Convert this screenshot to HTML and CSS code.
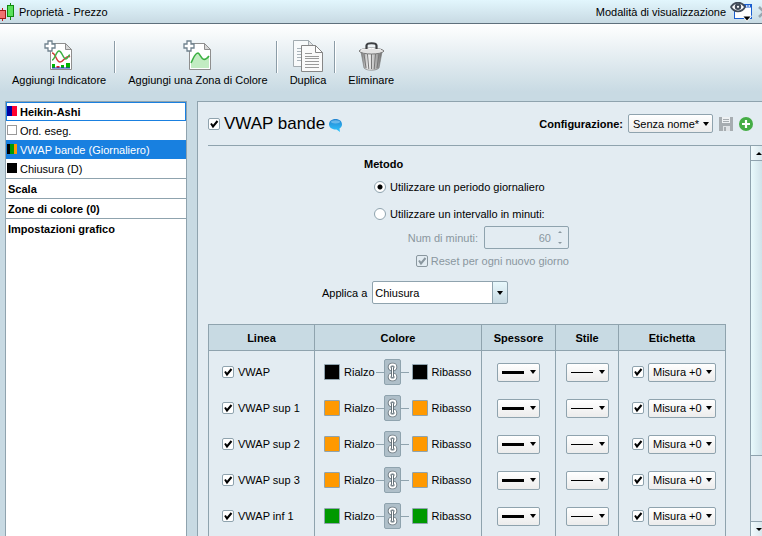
FILE: index.html
```html
<!DOCTYPE html>
<html lang="it">
<head>
  <meta charset="UTF-8" />
  <title>Proprietà - Prezzo</title>
  <link rel="stylesheet" href="styles.css">
</head>
<body>

<svg class="defs" width="0" height="0" aria-hidden="true">
  <symbol id="chain" viewBox="0 0 11 20">
    <g fill="none" stroke="#66727a" stroke-width="3.600">
      <rect x="2.500" y="2.500" width="6" height="5" rx="2.500"/>
      <rect x="2.500" y="12.500" width="6" height="5" rx="2.500"/>
    </g>
    <g fill="none" stroke="#fff" stroke-width="1.800">
      <rect x="2.500" y="2.500" width="6" height="5" rx="2.500"/>
      <rect x="2.500" y="12.500" width="6" height="5" rx="2.500"/>
    </g>
    <rect x="4.500" y="4.500" width="2" height="11" rx="1" fill="#fff" stroke="#66727a"/>
  </symbol>
  <symbol id="plus" viewBox="0 0 12 12">
    <path d="M4 1h4v3h3v4H8v3H4V8H1V4h3z" fill="#fff" stroke="#70828e" stroke-width="1.3"/>
  </symbol>
</svg>

<header class="titlebar">
  <svg class="candles" width="16" height="18" viewBox="0 0 16 18">
    <path d="M2.500 5v13" stroke="#c01818"/>
    <rect x="-.5" y="7.500" width="6" height="8" fill="#f07070" stroke="#a01818"/>
    <path d="M10.500 0v17" stroke="#108a10"/>
    <rect x="7.500" y="2.500" width="6" height="11" fill="#58e058" stroke="#108a10"/>
  </svg>
  <h1>Proprietà - Prezzo</h1>
  <span class="view-label">Modalità di visualizzazione</span>
  <button class="icon-btn view-btn" aria-label="Modalità di visualizzazione">
    <svg width="24" height="20" viewBox="0 0 24 20">
      <rect x="4.500" y="2.500" width="17" height="14" fill="#fff" stroke="#1a5fd0"/>
      <rect x="5" y="2" width="16" height="3.500" fill="#1a5fd0"/>
      <path d="M16 4h1.500M18.500 4H20" stroke="#fff" stroke-width="1.500"/>
      <path d="M0 5C3-2 13-2 16 5 13 12 3 12 0 5z" fill="#414b58"/>
      <path d="M2 5C5 .5 11 .5 14 5 11 9.500 5 9.500 2 5z" fill="#fff"/>
      <circle cx="8" cy="4.800" r="3.200" fill="#414b58"/>
      <circle cx="8" cy="4.800" r="1.100" fill="#fff"/>
      <path d="M13.500 14.500h7l-3.500 4z" fill="#000" stroke="#fff" stroke-width="1.600" paint-order="stroke"/>
    </svg>
  </button>
  <button class="icon-btn close-btn" aria-label="Chiudi">
    <svg width="12" height="12" viewBox="0 0 12 12"><path d="M1 1l10 10M11 1L1 11" stroke="#9aa7b0" stroke-width="2.500"/></svg>
  </button>
</header>

<nav class="toolbar">
  <button class="tool">
    <svg width="32" height="32" viewBox="0 0 32 32">
      <path d="M7.500 3.500h15l6 6v20h-21z" fill="#fff" stroke="#8e8e8e"/>
      <path d="M22.500 3.500v6h6z" fill="#d8d8d8" stroke="#8e8e8e"/>
      <path d="M9 13c4 0 4 9 8 9s6-8 10-5" fill="none" stroke="#d03a3a" stroke-width="1.500"/>
      <path d="M9 20c3 0 4-9 7-9s4 8 7 8c2 0 2-4 4-4" fill="none" stroke="#3cb043" stroke-width="1.500"/>
      <path d="M9 24h3v4H9zM18 25h3v3h-3zM23 23h4v5h-4z" fill="#00b400"/>
      <rect x="13.500" y="26" width="3" height="2" fill="#e02020"/>
      <path d="M9 28h18" stroke="#1830c0"/>
      <use href="#plus" x="1" y="0" width="12" height="12"/>
    </svg>
    <span>Aggiungi Indicatore</span>
  </button>
  <i class="sep"></i>
  <button class="tool">
    <svg width="32" height="32" viewBox="0 0 32 32">
      <path d="M7.500 3.500h15l6 6v20h-21z" fill="#fff" stroke="#8e8e8e"/>
      <path d="M22.500 3.500v6h6z" fill="#d8d8d8" stroke="#8e8e8e"/>
      <path d="M9 23c3-6 4-10 7-10 3 1 4 9 11 3v12H9z" fill="#c2ecc2"/>
      <path d="M9 23c3-6 4-10 7-10 3 1 4 12 11 3" fill="none" stroke="#3cb043" stroke-width="1.500"/>
      <use href="#plus" x="1" y="0" width="12" height="12"/>
    </svg>
    <span>Aggiungi una Zona di Colore</span>
  </button>
  <i class="sep"></i>
  <button class="tool">
    <svg width="32" height="32" viewBox="0 0 32 32">
      <path d="M1.500.5h15l6 6v20h-21z" fill="#f8fafb" stroke="#a2abb0"/>
      <path d="M16.500.5v6h6z" fill="#e4e4e4" stroke="#a2abb0"/>
      <path d="M5 8.500h5M5 11.500h5M5 14.500h5M5 17.500h5M5 20.500h5" stroke="#a9b3ba"/>
      <path d="M9.500 5.500h14l7 7v19h-21z" fill="#fafafa" stroke="#868686"/>
      <path d="M23.500 5.500v7h7z" fill="#fff" stroke="#868686"/>
      <path d="M13 13.500h7M13 16.500h14M13 18.500h14M13 21.500h14M13 24.500h14M13 27.500h14" stroke="#9a9a9a"/>
    </svg>
    <span>Duplica</span>
  </button>
  <i class="sep"></i>
  <button class="tool">
    <svg width="32" height="32" viewBox="0 0 32 32">
      <defs>
        <linearGradient id="can">
          <stop offset="0" stop-color="#777"/>
          <stop offset=".35" stop-color="#f4f4f4"/>
          <stop offset=".7" stop-color="#b4b4b4"/>
          <stop offset="1" stop-color="#6c6c6c"/>
        </linearGradient>
      </defs>
      <path d="M6 12l3 16c3 3 12 3 15 0l3-16z" fill="url(#can)" stroke="#777" stroke-width=".6"/>
      <path d="M9 14l2 14M12.500 14l1.300 15M16.500 14v15M20.500 14l-1.300 15M24 14l-2 14" stroke="#777"/>
      <path d="M4 11c3-4 22-4 25 0-2 4-23 4-25 0z" fill="#e2e2e2" stroke="#7a7a7a"/>
      <path d="M6 10c4-2 17-2 20 0" fill="none" stroke="#fff"/>
      <path d="M11.500 9V5.500c0-3 10-3 10 0V9" fill="none" stroke="#3c3f42" stroke-width="2.200"/>
    </svg>
    <span>Eliminare</span>
  </button>
</nav>

<div class="workspace">

  <aside class="sidebar">
    <button class="item focused"><i class="mark heikin"></i>Heikin-Ashi</button>
    <button class="item"><i class="mark empty"></i>Ord. eseg.</button>
    <button class="item selected"><i class="mark bands"></i>VWAP bande (Giornaliero)</button>
    <button class="item"><i class="mark close"></i>Chiusura (D)</button>
    <button class="item section">Scala</button>
    <button class="item section">Zone di colore (0)</button>
    <button class="item section">Impostazioni grafico</button>
  </aside>

  <main class="panel">
    <div class="panel-head">
      <input type="checkbox" id="bands" checked>
      <label for="bands" class="panel-title">VWAP bande</label>
      <svg class="bubble" width="13" height="13" viewBox="0 0 13 13">
        <defs>
          <linearGradient id="blue" x2="0" y2="1">
            <stop offset="0" stop-color="#2484d0"/>
            <stop offset="1" stop-color="#2fc6ff"/>
          </linearGradient>
        </defs>
        <path d="M6.500 0C10.500 0 13 2.300 13 5.300c0 2-1 3.400-2.500 4.200l.5 3.500-3.500-2.500C3 10.800 0 8.500 0 5.300 0 2.300 2.500 0 6.500 0z" fill="url(#blue)"/>
        <ellipse cx="6.500" cy="2.800" rx="4.500" ry="1.600" fill="#8fd0f6" opacity=".6"/>
      </svg>
      <label for="config" class="config-label">Configurazione:</label>
      <select id="config" class="drop config"><option>Senza nome*</option></select>
      <button class="icon-btn" aria-label="Salva" disabled>
        <svg width="14" height="14" viewBox="0 0 14 14">
          <path d="M0 0h14v14H0z" fill="#a7adb1"/>
          <path d="M3 0h8v6H3z" fill="#eef1f3"/>
          <path d="M4 2.500h6M4 4.500h6" stroke="#a7adb1"/>
          <path d="M4 9h7v5H4z" fill="#dfe3e6"/>
          <path d="M5 10h2v4H5z" fill="#a7adb1"/>
        </svg>
      </button>
      <button class="icon-btn" aria-label="Aggiungi">
        <svg width="14" height="14" viewBox="0 0 14 14">
          <circle cx="7" cy="7" r="7" fill="#45ad45"/>
          <path d="M7 3v8M3 7h8" stroke="#fff" stroke-width="2.200"/>
        </svg>
      </button>
    </div>

    <div class="panel-body">
      <div class="content">
        <form class="method">
          <h2>Metodo</h2>
          <div class="row"><input type="radio" name="period" id="daily" checked><label for="daily">Utilizzare un periodo giornaliero</label></div>
          <div class="row"><input type="radio" name="period" id="interval"><label for="interval">Utilizzare un intervallo in minuti:</label></div>
          <div class="minutes">
            <label for="minutes">Num di minuti:</label>
            <span class="spinner">
              <input type="text" id="minutes" value="60" disabled>
              <svg width="6" height="15" viewBox="0 0 6 15"><path d="M3 1l2 2H1zM3 14l2-2H1z" fill="#8a979f"/></svg>
            </span>
          </div>
          <div class="reset"><input type="checkbox" id="reset" checked disabled><label for="reset">Reset per ogni nuovo giorno</label></div>
        </form>

        <div class="apply">
          <label for="apply">Applica a</label>
          <select id="apply" class="combo"><option>Chiusura</option></select>
        </div>

        <table class="lines">
          <colgroup><col class="c-line"><col class="c-color"><col class="c-width"><col class="c-style"><col class="c-tag"></colgroup>
          <thead>
            <tr><th>Linea</th><th>Colore</th><th>Spessore</th><th>Stile</th><th>Etichetta</th></tr>
          </thead>
          <tbody>
            <tr>
              <td><div class="cell name"><input type="checkbox" id="l1" checked><label for="l1">VWAP</label></div></td>
              <td><div class="cell colors"><button class="swatch black" id="up1"></button><label for="up1">Rialzo</label><i class="dash"></i><button class="link" aria-label="Collega"><svg width="11" height="20"><use href="#chain"/></svg></button><i class="dash"></i><button class="swatch black" id="dn1"></button><label for="dn1">Ribasso</label></div></td>
              <td><div class="cell"><select class="drop stroke thick" aria-label="Spessore"><option></option></select></div></td>
              <td><div class="cell"><select class="drop stroke thin" aria-label="Stile"><option></option></select></div></td>
              <td><div class="cell tag"><input type="checkbox" aria-label="Etichetta" checked><select class="drop measure" aria-label="Misura"><option>Misura +0</option></select></div></td>
            </tr>
            <tr>
              <td><div class="cell name"><input type="checkbox" id="l2" checked><label for="l2">VWAP sup 1</label></div></td>
              <td><div class="cell colors"><button class="swatch orange" id="up2"></button><label for="up2">Rialzo</label><i class="dash"></i><button class="link" aria-label="Collega"><svg width="11" height="20"><use href="#chain"/></svg></button><i class="dash"></i><button class="swatch orange" id="dn2"></button><label for="dn2">Ribasso</label></div></td>
              <td><div class="cell"><select class="drop stroke thick" aria-label="Spessore"><option></option></select></div></td>
              <td><div class="cell"><select class="drop stroke thin" aria-label="Stile"><option></option></select></div></td>
              <td><div class="cell tag"><input type="checkbox" aria-label="Etichetta" checked><select class="drop measure" aria-label="Misura"><option>Misura +0</option></select></div></td>
            </tr>
            <tr>
              <td><div class="cell name"><input type="checkbox" id="l3" checked><label for="l3">VWAP sup 2</label></div></td>
              <td><div class="cell colors"><button class="swatch orange" id="up3"></button><label for="up3">Rialzo</label><i class="dash"></i><button class="link" aria-label="Collega"><svg width="11" height="20"><use href="#chain"/></svg></button><i class="dash"></i><button class="swatch orange" id="dn3"></button><label for="dn3">Ribasso</label></div></td>
              <td><div class="cell"><select class="drop stroke thick" aria-label="Spessore"><option></option></select></div></td>
              <td><div class="cell"><select class="drop stroke thin" aria-label="Stile"><option></option></select></div></td>
              <td><div class="cell tag"><input type="checkbox" aria-label="Etichetta" checked><select class="drop measure" aria-label="Misura"><option>Misura +0</option></select></div></td>
            </tr>
            <tr>
              <td><div class="cell name"><input type="checkbox" id="l4" checked><label for="l4">VWAP sup 3</label></div></td>
              <td><div class="cell colors"><button class="swatch orange" id="up4"></button><label for="up4">Rialzo</label><i class="dash"></i><button class="link" aria-label="Collega"><svg width="11" height="20"><use href="#chain"/></svg></button><i class="dash"></i><button class="swatch orange" id="dn4"></button><label for="dn4">Ribasso</label></div></td>
              <td><div class="cell"><select class="drop stroke thick" aria-label="Spessore"><option></option></select></div></td>
              <td><div class="cell"><select class="drop stroke thin" aria-label="Stile"><option></option></select></div></td>
              <td><div class="cell tag"><input type="checkbox" aria-label="Etichetta" checked><select class="drop measure" aria-label="Misura"><option>Misura +0</option></select></div></td>
            </tr>
            <tr>
              <td><div class="cell name"><input type="checkbox" id="l5" checked><label for="l5">VWAP inf 1</label></div></td>
              <td><div class="cell colors"><button class="swatch green" id="up5"></button><label for="up5">Rialzo</label><i class="dash"></i><button class="link" aria-label="Collega"><svg width="11" height="20"><use href="#chain"/></svg></button><i class="dash"></i><button class="swatch green" id="dn5"></button><label for="dn5">Ribasso</label></div></td>
              <td><div class="cell"><select class="drop stroke thick" aria-label="Spessore"><option></option></select></div></td>
              <td><div class="cell"><select class="drop stroke thin" aria-label="Stile"><option></option></select></div></td>
              <td><div class="cell tag"><input type="checkbox" aria-label="Etichetta" checked><select class="drop measure" aria-label="Misura"><option>Misura +0</option></select></div></td>
            </tr>
          </tbody>
        </table>
      </div>

      <div class="scrollbar">
        <button class="arrow" aria-label="Su"><svg width="6" height="3" viewBox="0 0 6 3"><path d="M3 0l3 3H0z"/></svg></button>
        <div class="track"><div class="thumb"></div></div>
        <button class="arrow down" aria-label="Giù"><svg width="6" height="3" viewBox="0 0 6 3"><path d="M0 0h6L3 3z"/></svg></button>
      </div>
    </div>
  </main>

</div>

</body>
</html>
```

FILE: styles.css
```css
* { box-sizing: border-box; }
body { display: flex; flex-direction: column; height: 100vh; margin: 0; overflow: hidden; background: #c8dae3; color: #000; font: 11px/14px "Liberation Sans", Arial, sans-serif; }
button, input, select { margin: 0; padding: 0; border: none; border-radius: 0; background: none; color: inherit; font: inherit; }
svg { display: block; flex: none; }
.defs { position: absolute; }

/* title bar */
.titlebar { display: flex; align-items: center; height: 24px; flex: none; border-bottom: 1px solid #5f707c; background: linear-gradient(#e2f6fd, #c8dae3); }
.titlebar h1 { flex: 1; margin: 0 0 0 3px; font-size: 11px; font-weight: normal; }
.icon-btn { flex: none; }
.view-btn { margin-left: 4px; }
.close-btn { margin: 0 -8px 0 4px; }

/* toolbar */
.toolbar { display: flex; flex: none; height: 77px; padding: 16px 0 0 12px; background: linear-gradient(#fff, #c8dae3 68px); }
.tool { display: flex; flex-direction: column; align-items: center; height: 48px; gap: 1px; white-space: nowrap; }
.sep { width: 2px; height: 32px; margin: 1px 12px 0 8px; border-left: 1px solid #8b9ca7; border-right: 1px solid #fff; }

.workspace { display: flex; flex: 1; min-height: 0; gap: 10px; padding-left: 5px; }

/* sidebar */
.sidebar { display: flex; flex-direction: column; flex: none; width: 182px; border: 1px solid #8fa3ae; border-bottom: none; background: #fff; }
.item { display: flex; align-items: center; gap: 3px; height: 19px; padding-left: 1px; text-align: left; }
.item.focused { padding-left: 0; border: 1px solid #1a80e0; font-weight: bold; }
.item.selected { background: #1880e0; color: #fff; }
.item.section { height: 20px; padding-left: 2px; border-top: 1px solid #8fa3ae; font-weight: bold; }
.mark { width: 10px; height: 10px; flex: none; margin-bottom: 2px; }
.mark.heikin { background: linear-gradient(90deg, #0000a0 50%, #ff0030 50%); }
.mark.empty { border: 1px solid #999; }
.mark.bands { background: linear-gradient(90deg, #000 30%, #009900 30% 70%, #ff9900 70%); }
.mark.close { background: #000; }

/* ticks and radios */
input[type="checkbox"], input[type="radio"] { appearance: none; flex: none; width: 12px; height: 12px; border: 1px solid #8fa3ae; border-radius: 2px; background: #fff; }
input[type="checkbox"]:checked { background: #fff url("data:image/svg+xml,%3Csvg xmlns='http://www.w3.org/2000/svg' viewBox='0 0 10 10'%3E%3Cpath d='M2 4.500l2 3L8.500 2' fill='none' stroke='%23000' stroke-width='2'/%3E%3C/svg%3E"); }
input[type="checkbox"]:disabled { border-color: #8a979f; background: url("data:image/svg+xml,%3Csvg xmlns='http://www.w3.org/2000/svg' viewBox='0 0 10 10'%3E%3Cpath d='M2 4.500l2 3L8.500 2' fill='none' stroke='%238a979f' stroke-width='2'/%3E%3C/svg%3E"); }
input[type="radio"] { border-radius: 50%; }
input[type="radio"]:checked { background: radial-gradient(circle, #000 2px, #fff 3px); }

/* drop-downs */
.drop { appearance: none; height: 19px; padding-left: 4px; border: 1px solid #8fa3ae; border-radius: 2px; background: url("data:image/svg+xml,%3Csvg xmlns='http://www.w3.org/2000/svg' width='6' height='4'%3E%3Cpath d='M0 0h6L3 4z'/%3E%3C/svg%3E") right 3px center no-repeat, linear-gradient(#fff, #ececec); }
.config { width: 85px; margin: 0 6px 0 5px; }
.measure { width: 68px; }
.stroke { width: 43px; }
.thick, .thin { background: url("data:image/svg+xml,%3Csvg xmlns='http://www.w3.org/2000/svg' width='6' height='4'%3E%3Cpath d='M0 0h6L3 4z'/%3E%3C/svg%3E") right 3px center no-repeat, linear-gradient(#000, #000) 4px 7px / 22px 3px no-repeat, linear-gradient(#fff, #ececec); }
.thin { background-size: auto, 22px 1px, auto; background-position: right 3px center, 4px 8px, 0 0; }
.combo { appearance: none; width: 136px; height: 23px; padding-left: 2px; border: 1px solid #8fa3ae; border-radius: 2px; background: url("data:image/svg+xml,%3Csvg xmlns='http://www.w3.org/2000/svg' width='6' height='4'%3E%3Cpath d='M0 0h6L3 4z'/%3E%3C/svg%3E") right 4px center no-repeat, linear-gradient(#8fa3ae, #8fa3ae) right 14px top / 1px 100% no-repeat, linear-gradient(#e8f8fc, #c8dae3) right / 14px 100% no-repeat, #fff; }

/* panel */
.panel { display: flex; flex-direction: column; flex: 1; min-width: 0; margin-right: -4px; border: 1px solid #8fa3ae; border-width: 1px 0 0 1px; background: #e3ecf2; }
.panel-head { display: flex; align-items: center; height: 44px; flex: none; margin-left: 10px; padding-right: 13px; border-bottom: 1px solid #8fa3ae; }
.panel-title { margin: 0 4px; font-size: 17px; line-height: 20px; }
.bubble { margin-top: 4px; }
.config-label { margin-left: auto; font-weight: bold; }
.panel-head .icon-btn + .icon-btn { margin-left: 6px; }
.panel-body { display: flex; flex: 1; min-height: 0; }
.content { flex: 1; min-width: 0; overflow: hidden; padding: 11px 0 0 10px; }

.method { margin-left: 156px; width: 205px; }
.method h2 { margin: 0 0 9px; font-size: 11px; line-height: 14px; }
.row { display: flex; align-items: center; gap: 4px; height: 14px; margin: 0 0 13px 10px; }
.minutes, .reset { display: flex; align-items: center; justify-content: flex-end; color: #8a979f; }
.row + .minutes { margin-top: -8px; }
.minutes { gap: 6px; }
.spinner { display: flex; align-items: center; gap: 6px; width: 85px; height: 23px; padding-right: 5px; border: 1px solid #8fa3ae; border-radius: 2px; }
.spinner input { flex: 1; min-width: 0; text-align: right; }
.reset { gap: 3px; margin-top: 5px; }
.apply { display: flex; align-items: center; gap: 5px; margin: 13px 0 20px 114px; }

/* lines table */
.lines { width: 518px; table-layout: fixed; border-collapse: collapse; border: 1px solid #8fa3ae; border-bottom: none; }
.c-line { width: 106px; }
.c-color { width: 167px; }
.c-width { width: 74px; }
.c-style { width: 63px; }
.lines th { height: 26px; padding: 0; border: 1px solid #8fa3ae; background: #c8dae3; }
.lines td { height: 36px; padding: 0; border: 1px solid #8fa3ae; border-width: 0 1px; }
.lines tr:first-child td { padding-top: 3px; }
.lines tr:last-child td { padding-bottom: 12px; }
.cell { display: flex; align-items: center; justify-content: center; height: 36px; }
.name { justify-content: flex-start; gap: 4px; padding-left: 13px; }
.colors { justify-content: flex-start; padding-left: 9px; }
.swatch { width: 16px; height: 16px; margin-right: 4px; border: 1px solid #8fa3ae; border-radius: 1px; }
.swatch.black { background: #000; }
.swatch.orange { background: #ff9900; }
.swatch.green { background: #009900; }
.dash { width: 8px; height: 1px; margin-left: 1px; background: #8fa3ae; }
.link { display: flex; align-items: center; justify-content: center; width: 17px; height: 26px; border: 1px solid #8fa3ae; border-radius: 2px; background: #afbfc9; }
.link + .dash { margin: 0 3px 0 0; }
.tag { justify-content: flex-start; gap: 4px; padding-left: 13px; }

/* scrollbar */
.scrollbar { display: flex; flex-direction: column; flex: none; width: 16px; border-left: 1px solid #8fa3ae; }
.arrow { display: flex; align-items: center; justify-content: center; height: 15px; flex: none; border-bottom: 1px solid #8fa3ae; background: linear-gradient(90deg, #f2fbfd, #cfe0e7); }
.arrow.down { border-top: 1px solid #8fa3ae; border-bottom: none; }
.track { flex: 1; background: #e3ecf2; }
.thumb { height: 82%; border-bottom: 1px solid #8fa3ae; background: linear-gradient(90deg, #e8fafc, #c8dae3); }
```
